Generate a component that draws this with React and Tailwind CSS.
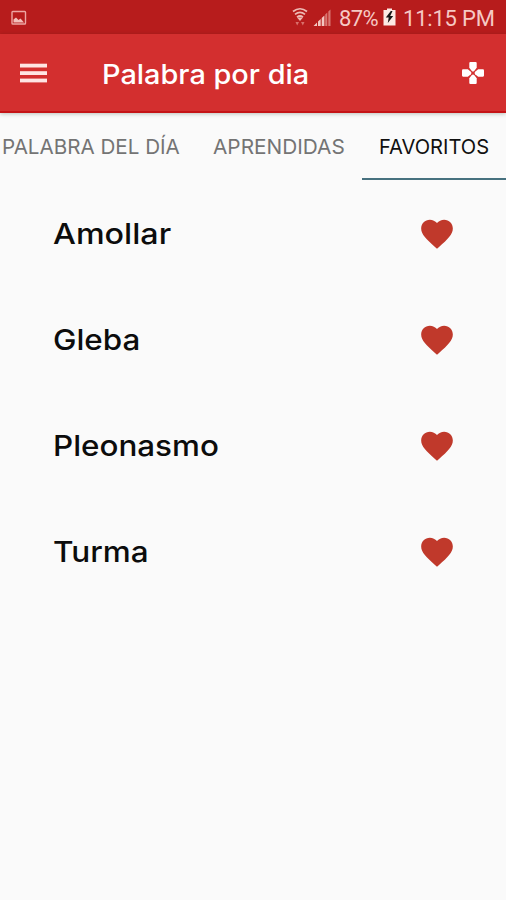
import React from "react";
import { MdFavorite } from "react-icons/md";

const words = [
  { name: "Amollar", stretch: "scale-x-[1.113]" },
  { name: "Gleba", stretch: "scale-x-[1.082]" },
  { name: "Pleonasmo", stretch: "scale-x-[1.082]" },
  { name: "Turma", stretch: "scale-x-[1.085]" },
];

function StatusBar() {
  return (
    <div className="flex h-[34px] items-center bg-[#b71c1c] pl-[11px] font-[Roboto,sans-serif] text-[22px] text-[#f6c9c4]">
      <svg width="16" height="16" viewBox="0 0 16 16" className="mt-0.5">
        <rect x="1" y="1.5" width="13.5" height="12.5" rx="0.8" fill="none" stroke="#eda6a2" strokeWidth="1.4" />
        <path d="M2.5 12.5V9.5L5 7.5L7.5 10L9.5 8.5L13 12.5Z" fill="#f3c0bb" />
      </svg>
      <svg width="18" height="20" viewBox="0 0 18 20" className="ml-[264px]">
        <g fill="none" stroke="#eebbb5" strokeWidth="1.7">
          <path d="M2 4.5Q9 -1 16 4.5" />
          <path d="M4 7.4Q9 3.2 14 7.4" />
          <path d="M6 10.2Q9 7.8 12 10.2" />
        </g>
        <path d="M6 10.4H12L9 14Z" fill="#eebbb5" />
        <path d="M4.5 15H8L6.2 18.5ZM10 15H13.5L11.8 18.5Z" fill="#d9706c" />
      </svg>
      <svg width="19" height="18" viewBox="0 0 19 18" className="ml-[4px] mt-px">
        <path d="M0.5 17L4 13.5V17ZM5 12.5L7.7 10V17H5ZM8.7 9L11.4 6.5V17H8.7Z" fill="#f3c6c0" />
        <path d="M12.2 5.5L14.3 3.5V17H12.2ZM15.3 2.5L17.5 0.5V17H15.3Z" fill="#d87772" />
      </svg>
      <span className="ml-[7px] mt-[2px] w-[42px] whitespace-nowrap tracking-[-0.6px]">87%</span>
      <svg width="13" height="18" viewBox="0 0 13 18" className="ml-[2px]">
        <path d="M0.5 2H4V0.5H9V2H12.5V17.5H0.5Z" fill="#fde9e4" />
        <path d="M7.8 3L2.8 9.5H5.7L4.8 15L10.2 8H7.2L9.5 3Z" fill="#171717" />
      </svg>
      <span className="ml-[7px] mt-[2px] whitespace-nowrap tracking-[-0.2px]">11:15 PM</span>
    </div>
  );
}

function AppBar() {
  return (
    <header className="relative flex h-[79px] items-center border-b-2 border-[#c51316] bg-[#d32f2f] pl-5 pr-[21px] text-white shadow-[0_1px_4px_rgba(0,30,0,0.25)]">
      <svg width="27" height="20" viewBox="0 0 27 20" fill="#ffe5e3">
        <rect y="0.7" width="27" height="3.8" />
        <rect y="8.2" width="27" height="3.8" />
        <rect y="15.6" width="27" height="3.8" />
      </svg>
      <h1 className="ml-[55px] mt-[5px] origin-left scale-x-[1.07] whitespace-nowrap text-[27px] font-medium">Palabra por dia</h1>
      <svg width="24" height="24" viewBox="-12 -12 24 24" className="ml-auto mt-px" fill="#fff">
        <path id="pad" d="M-2.6 -11H2.6Q3.7 -11 3.7 -9.9V-5.2L1.2 -2.1Q0 -0.9 -1.2 -2.1L-3.7 -5.2V-9.9Q-3.7 -11 -2.6 -11Z" />
        <use href="#pad" transform="rotate(90)" />
        <use href="#pad" transform="rotate(180)" />
        <use href="#pad" transform="rotate(270)" />
      </svg>
    </header>
  );
}

function Tabs() {
  return (
    <nav className="mb-px flex h-[67px] whitespace-nowrap text-[20px] leading-[68px] text-[#747474]">
      <div className="w-[210px] pl-[2px]">
        <span className="inline-block origin-left scale-x-[1.03]">PALABRA DEL DÍA</span>
      </div>
      <div className="w-[152px] pl-[3px]">
        <span className="inline-block origin-left scale-x-[1.04]">APRENDIDAS</span>
      </div>
      <div className="w-[144px] border-b-2 border-[#47717f] pl-[17px] text-[#101010]">
        <span className="inline-block origin-left scale-x-[1.005]">FAVORITOS</span>
      </div>
    </nav>
  );
}

export default function App() {
  return (
    <div className="h-[900px] w-[506px] overflow-hidden bg-[#fafafa] font-[Inter,sans-serif]">
      <StatusBar />
      <AppBar />
      <Tabs />
      <ul>
        {words.map((word) => (
          <li key={word.name} className="flex h-[106px] items-center justify-between pl-[53px] pr-[50px]">
            <span className={"origin-left text-[29px] font-medium text-[#0c0c0c] " + word.stretch}>{word.name}</span>
            <MdFavorite size={38} color="#c0392b" />
          </li>
        ))}
      </ul>
    </div>
  );
}
